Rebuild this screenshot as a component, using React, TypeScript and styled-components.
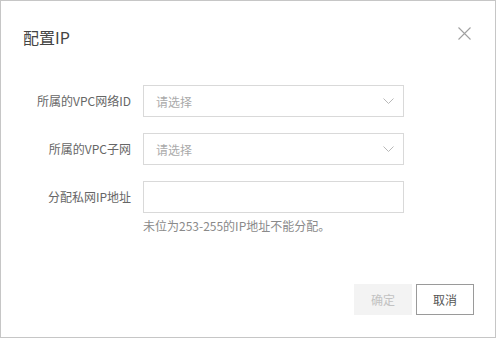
import React from "react";
import styled, { createGlobalStyle } from "styled-components";

const Global = createGlobalStyle`
  html, body { margin: 0; padding: 0; background: #fff; }
  body { font-family: "Noto Sans CJK SC", "Noto Sans", "Liberation Sans", sans-serif; }
  * { box-sizing: border-box; }
`;

const Dialog = styled.div`
  width: 496px;
  height: 338px;
  border: 1px solid #c6c6c6;
  background: #fff;
  display: flex;
  flex-direction: column;
`;

const Header = styled.div`
  height: 69px;
  display: flex;
  align-items: center;
  justify-content: space-between;
  padding: 0 24px 0 22px;
`;

const Title = styled.div`
  font-size: 16px;
  color: #444;
  line-height: 20px;
  margin-top: 2px;
`;

const Close = styled.button`
  width: 14px;
  height: 14px;
  padding: 0;
  border: none;
  background: none;
  display: flex;
  align-items: center;
  justify-content: center;
  margin-top: -4px;
`;

const Body = styled.div`
  padding-top: 15px;
  display: flex;
  flex-direction: column;
  gap: 16px;
  flex: 1;
`;

const Row = styled.div`
  display: flex;
  align-items: flex-start;
`;

const Label = styled.div`
  width: 130px;
  text-align: right;
  font-size: 12px;
  color: #666;
  line-height: 32px;
  margin-right: 12px;
`;

const Field = styled.div`
  display: flex;
  flex-direction: column;
`;

const Box = styled.div`
  width: 261px;
  height: 32px;
  border: 1px solid #d9d9d9;
  display: flex;
  align-items: center;
  justify-content: space-between;
  padding: 0 9px 0 12px;
  font-size: 12px;
  color: #aaa;
`;

const Help = styled.div`
  font-size: 12px;
  color: #8a8a8a;
  line-height: 14px;
  margin-top: 6px;
`;

const Footer = styled.div`
  display: flex;
  justify-content: flex-end;
  gap: 4px;
  padding: 0 21px 22px 0;
`;

const Btn = styled.button<{ $primary?: boolean }>`
  width: 58px;
  height: 31px;
  font-family: inherit;
  font-size: 12px;
  padding: 0;
  background: ${(p) => (p.$primary ? "#f3f3f3" : "#fff")};
  color: ${(p) => (p.$primary ? "#c2c2c2" : "#555")};
  border: 1px solid ${(p) => (p.$primary ? "#f3f3f3" : "#9a9a9a")};
`;

const Chevron = () => (
  <svg width="11" height="7" viewBox="0 0 11 7">
    <path d="M0.5 0.5 L5.5 5.5 L10.5 0.5" fill="none" stroke="#b8b8b8" strokeWidth="1" />
  </svg>
);

export default function App() {
  return (
    <>
      <Global />
      <Dialog>
        <Header>
          <Title>配置IP</Title>
          <Close aria-label="close">
            <svg width="13" height="13" viewBox="0 0 13 13">
              <path d="M0.5 0.5 L12.5 12.5 M12.5 0.5 L0.5 12.5" stroke="#a0a0a0" strokeWidth="1.1" />
            </svg>
          </Close>
        </Header>
        <Body>
          <Row>
            <Label>所属的VPC网络ID</Label>
            <Box>
              <span>请选择</span>
              <Chevron />
            </Box>
          </Row>
          <Row>
            <Label>所属的VPC子网</Label>
            <Box>
              <span>请选择</span>
              <Chevron />
            </Box>
          </Row>
          <Row>
            <Label>分配私网IP地址</Label>
            <Field>
              <Box />
              <Help>未位为253-255的IP地址不能分配。</Help>
            </Field>
          </Row>
        </Body>
        <Footer>
          <Btn $primary>确定</Btn>
          <Btn>取消</Btn>
        </Footer>
      </Dialog>
    </>
  );
}
